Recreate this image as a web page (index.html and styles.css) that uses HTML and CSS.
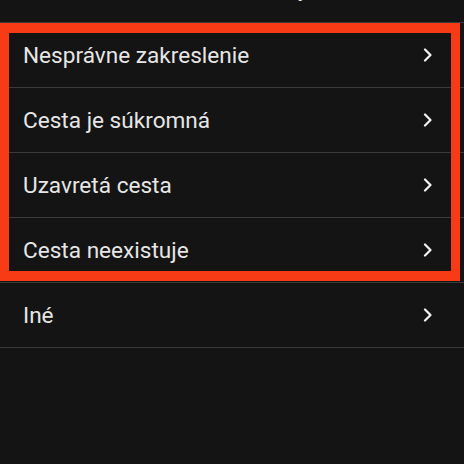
FILE: index.html
```html
<!DOCTYPE html>
<html lang="sk">
<head>
    <meta charset="UTF-8">
    <meta name="viewport" content="width=device-width, initial-scale=1.0">
    <title>Nahlásiť chybu</title>
    <link rel="stylesheet" href="styles.css">
</head>
<body>

    <!-- title is scrolled mostly off the top -->
    <div class="header">
        <span class="title">Nahlásiť chybu</span>
    </div>

    <div class="list">
        <div class="highlight">
            <div class="row">
                <span>Nesprávne zakreslenie</span>
                <svg class="chevron" viewBox="0 0 10 14"><path d="M2 1.5 L7.5 7 L2 12.5"/></svg>
            </div>
            <div class="row">
                <span>Cesta je súkromná</span>
                <svg class="chevron" viewBox="0 0 10 14"><path d="M2 1.5 L7.5 7 L2 12.5"/></svg>
            </div>
            <div class="row">
                <span>Uzavretá cesta</span>
                <svg class="chevron" viewBox="0 0 10 14"><path d="M2 1.5 L7.5 7 L2 12.5"/></svg>
            </div>
            <div class="row">
                <span>Cesta neexistuje</span>
                <svg class="chevron" viewBox="0 0 10 14"><path d="M2 1.5 L7.5 7 L2 12.5"/></svg>
            </div>
        </div>
        <div class="row">
            <span>Iné</span>
            <svg class="chevron" viewBox="0 0 10 14"><path d="M2 1.5 L7.5 7 L2 12.5"/></svg>
        </div>
    </div>

</body>
</html>
```

FILE: styles.css
```css
body {
    margin: 0;
    background: #141414;
    font-family: Roboto, 'Noto Sans', sans-serif;
    color: #e6e6e6;
}

.header {
    height: 22px;
    border-bottom: 1px solid #3b3b3b;
    overflow: hidden;
    display: flex;
    justify-content: center;
    align-items: flex-end;
}

.title {
    font-size: 22px;
    line-height: 22px;
    margin-bottom: 22px;
    padding-left: 56px;
}

.highlight {
    position: relative;
}

.highlight::after {
    content: "";
    position: absolute;
    top: 0;
    left: 0;
    right: 4px;
    bottom: 2px;
    border: 10px solid #f63b15;
    border-left-width: 9px;
    border-right-width: 9px;
    pointer-events: none;
}

.row {
    height: 64px;
    border-bottom: 1px solid #3b3b3b;
    display: flex;
    align-items: center;
    justify-content: space-between;
    padding: 0 30px 0 23px;
    font-size: 22.6px;
}

.chevron {
    width: 12px;
    height: 14px;
    fill: none;
    stroke: #f2f2f2;
    stroke-width: 2.2;
    stroke-linecap: round;
    stroke-linejoin: round;
}
```
